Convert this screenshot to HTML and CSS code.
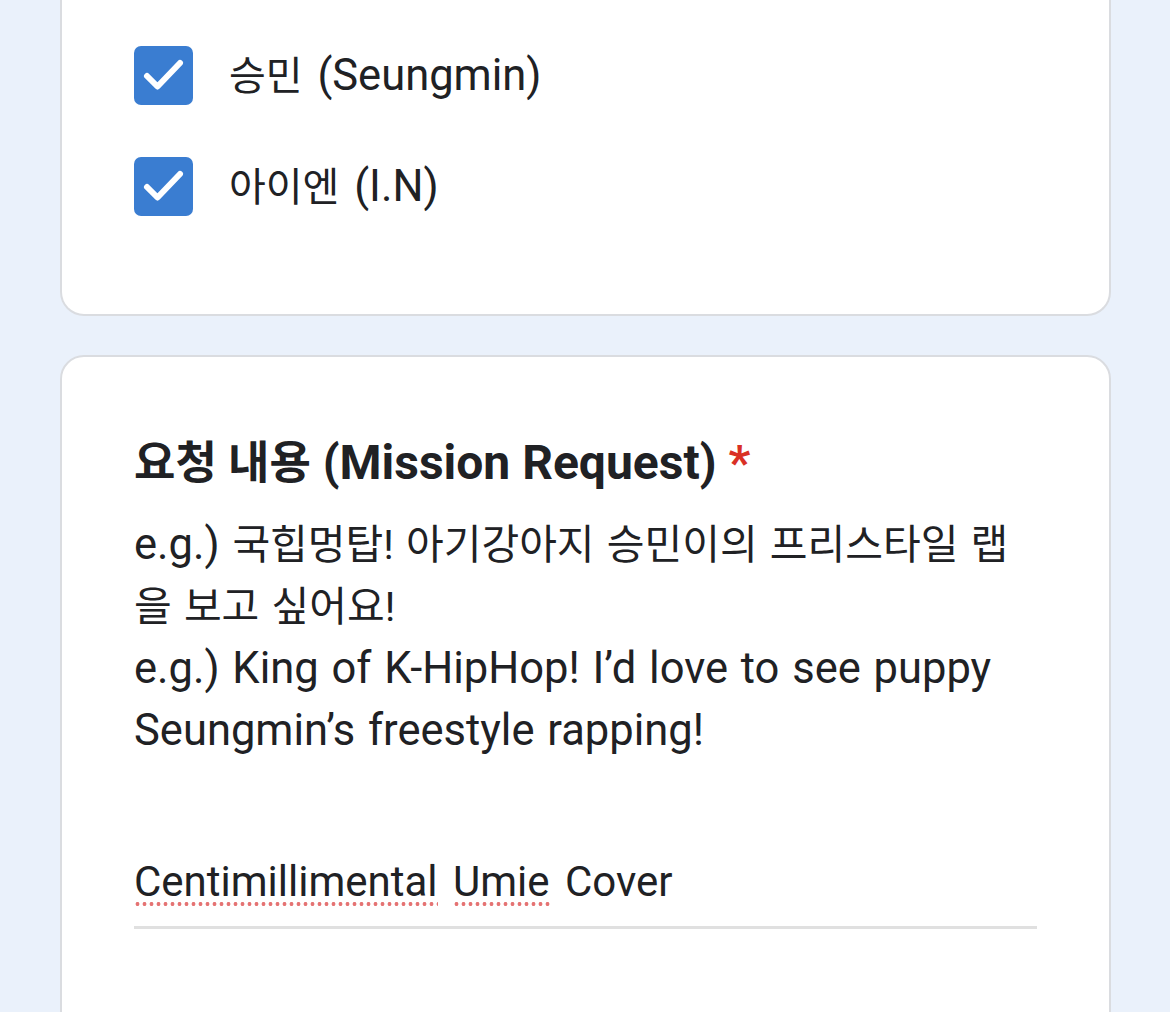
FILE: index.html
```html
<!DOCTYPE html>
<html lang="ko">
<head>
<meta charset="utf-8">
<link rel="stylesheet" href="styles.css">
</head>
<body>
<div class="page">
  <section class="card card-top">
    <div class="options">
      <label class="option">
        <svg class="checkbox" viewBox="0 0 59 59" width="59" height="59"><rect x="0" y="0" width="59" height="59" rx="7" fill="#3a7dd1"/><polyline points="13,30 23.5,40.5 46,17" fill="none" stroke="#fff" stroke-width="6" stroke-linecap="round" stroke-linejoin="round"/></svg>
        <span class="option-text"><span class="ko">승민</span> (Seungmin)</span>
      </label>
      <label class="option">
        <svg class="checkbox" viewBox="0 0 59 59" width="59" height="59"><rect x="0" y="0" width="59" height="59" rx="7" fill="#3a7dd1"/><polyline points="13,30 23.5,40.5 46,17" fill="none" stroke="#fff" stroke-width="6" stroke-linecap="round" stroke-linejoin="round"/></svg>
        <span class="option-text"><span class="ko">아이엔</span> (I.N)</span>
      </label>
    </div>
  </section>
  <section class="card card-question">
    <h2 class="q-title"><span class="ko">요청 내용</span> (Mission Request) <span class="req">*</span></h2>
    <p class="q-desc">e.g.) <span class="ko">국힙멍탑! 아기강아지 승민이의 프리스타일 랩</span><span class="ko">을 보고 싶어요!</span><br>e.g.) King of K-HipHop! I’d love to see puppy Seungmin’s freestyle rapping!</p>
    <div class="answer"><span class="misspelled">Centimillimental</span> <span class="misspelled">Umie</span> Cover</div>
  </section>
</div>
</body>
</html>
```
FILE: styles.css
```css
html, body {
  margin: 0;
  padding: 0;
  background: #eaf1fb;
}
body {
  font-family: Roboto, "Noto Sans CJK KR", sans-serif;
  color: #202124;
}
.page {
  display: flex;
  flex-direction: column;
  gap: 39px;
  padding-left: 60px;
  width: 1051px;
}
.card {
  background: #fff;
  border: 2px solid #dadce0;
  border-radius: 24px;
  box-sizing: border-box;
}
.card-top {
  border-top: none;
  border-radius: 0 0 24px 24px;
  height: 316px;
  padding: 46px 72px 0;
}
.options {
  display: flex;
  flex-direction: column;
  gap: 52px;
}
.option {
  display: flex;
  align-items: center;
  gap: 36px;
  height: 59px;
}
.checkbox {
  flex: none;
  display: block;
}
.option-text {
  font-size: 43.5px;
  line-height: 59px;
  word-spacing: 4px;
}
.option-text .ko {
  font-size: 40px;
}
.card-question {
  height: 700px;
  padding: 76px 72px 0;
}
.q-title {
  margin: 0;
  font-size: 48px;
  font-weight: 700;
  line-height: 60px;
}
.q-title .ko {
  font-size: 45px;
}
.req {
  color: #d93025;
}
.q-desc {
  margin: 20px 0 0;
  font-size: 43.5px;
  line-height: 62px;
  word-spacing: 2px;
}
.q-desc .ko {
  font-size: 41px;
  line-height: 62px;
}
.answer {
  margin-top: 92px;
  width: 903px;
  font-size: 42px;
  line-height: 56px;
  word-spacing: 5px;
  padding-bottom: 16px;
  border-bottom: 3px solid #e0e0e0;
}
.misspelled {
  background-image: radial-gradient(circle at 3.5px 2px, #e57373 1.7px, transparent 2.2px);
  background-size: 7px 4px;
  background-repeat: repeat-x;
  background-position: 0 45px;
}
```
